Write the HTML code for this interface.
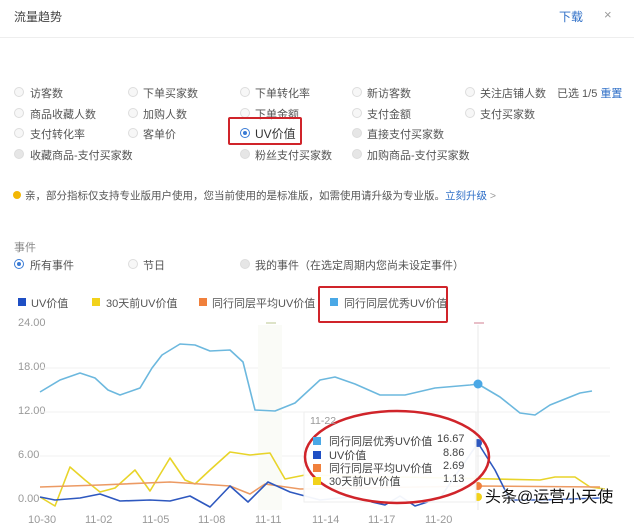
<!DOCTYPE html>
<html><head><meta charset="utf-8"><style>
*{margin:0;padding:0;box-sizing:border-box}
body{width:634px;height:517px;overflow:hidden;background:#fff;font-family:"Liberation Sans","Noto Sans CJK SC",sans-serif;font-size:11px;color:#555;position:relative}
.a{position:absolute;white-space:nowrap}
.r{position:absolute;width:10px;height:10px;border:1px solid #ddd;border-radius:50%;background:#f7f7f7}
.r.g{background:#e6e6e6}
.r.on{border-color:#3a7bd5;background:#fff}
.r.on::after{content:"";position:absolute;left:2px;top:2px;width:4px;height:4px;border-radius:50%;background:#3a7bd5}
.sq{position:absolute;width:8px;height:8px}
.x{position:absolute;top:514px;color:#999;font-size:11px}
</style></head><body>
<div class="a" style="left:14px;top:8px;font-size:12px;color:#444">流量趋势</div>
<div class="a" style="left:559px;top:8px;font-size:12px;color:#2f6fc7">下载</div>
<div class="a" style="left:604px;top:7px;font-size:13px;color:#999">×</div>
<div class="a" style="left:0;top:37px;width:634px;height:1px;background:#eee"></div>

<div class="r" style="left:14px;top:87px"></div><div class="a" style="left:30px;top:85px">访客数</div>
<div class="r" style="left:128px;top:87px"></div><div class="a" style="left:143px;top:85px">下单买家数</div>
<div class="r" style="left:240px;top:87px"></div><div class="a" style="left:255px;top:85px">下单转化率</div>
<div class="r" style="left:352px;top:87px"></div><div class="a" style="left:367px;top:85px">新访客数</div>
<div class="r" style="left:465px;top:87px"></div><div class="a" style="left:480px;top:85px">关注店铺人数</div>
<div class="a" style="left:557px;top:85px">已选 1/5 <span style="color:#2f6fc7">重置</span></div>

<div class="r" style="left:14px;top:108px"></div><div class="a" style="left:30px;top:106px">商品收藏人数</div>
<div class="r" style="left:128px;top:108px"></div><div class="a" style="left:143px;top:106px">加购人数</div>
<div class="r" style="left:240px;top:108px"></div><div class="a" style="left:255px;top:106px">下单金额</div>
<div class="r" style="left:352px;top:108px"></div><div class="a" style="left:367px;top:106px">支付金额</div>
<div class="r" style="left:465px;top:108px"></div><div class="a" style="left:480px;top:106px">支付买家数</div>

<div class="r" style="left:14px;top:128px"></div><div class="a" style="left:30px;top:126px">支付转化率</div>
<div class="r" style="left:128px;top:128px"></div><div class="a" style="left:143px;top:126px">客单价</div>
<div class="r on" style="left:240px;top:128px"></div><div class="a" style="left:255px;top:125px;font-size:12px;color:#333">UV价值</div>
<div class="a" style="left:228px;top:117px;width:74px;height:28px;border:2px solid #d0242a;border-radius:2px"></div>
<div class="r g" style="left:352px;top:128px"></div><div class="a" style="left:367px;top:126px">直接支付买家数</div>

<div class="r g" style="left:14px;top:149px"></div><div class="a" style="left:30px;top:147px">收藏商品-支付买家数</div>
<div class="r g" style="left:240px;top:149px"></div><div class="a" style="left:255px;top:147px">粉丝支付买家数</div>
<div class="r g" style="left:352px;top:149px"></div><div class="a" style="left:367px;top:147px">加购商品-支付买家数</div>

<div class="a" style="left:13px;top:191px;width:8px;height:8px;border-radius:50%;background:#f2b705"></div>
<div class="a" style="left:25px;top:188px;font-size:10.5px">亲，部分指标仅支持专业版用户使用，您当前使用的是标准版，如需使用请升级为专业版。<span style="color:#2f6fc7">立刻升级</span> <span style="color:#999">&gt;</span></div>

<div class="a" style="left:14px;top:239px;color:#888">事件</div>
<div class="r on" style="left:14px;top:259px"></div><div class="a" style="left:30px;top:257px">所有事件</div>
<div class="r" style="left:128px;top:259px"></div><div class="a" style="left:143px;top:257px">节日</div>
<div class="r g" style="left:240px;top:259px"></div><div class="a" style="left:255px;top:257px">我的事件（在选定周期内您尚未设定事件）</div>

<div class="sq" style="left:18px;top:298px;background:#1f4fc4"></div><div class="a" style="left:31px;top:295px">UV价值</div>
<div class="sq" style="left:92px;top:298px;background:#f2d21b"></div><div class="a" style="left:106px;top:295px">30天前UV价值</div>
<div class="sq" style="left:199px;top:298px;background:#f0803c"></div><div class="a" style="left:212px;top:295px">同行同层平均UV价值</div>
<div class="sq" style="left:330px;top:298px;background:#4aa8e6"></div><div class="a" style="left:344px;top:295px">同行同层优秀UV价值</div>
<div class="a" style="left:318px;top:286px;width:130px;height:37px;border:2px solid #d0242a;border-radius:2px"></div>

<div class="a" style="left:18px;top:317px;color:#999;font-size:11px">24.00</div>
<div class="a" style="left:18px;top:361px;color:#999;font-size:11px">18.00</div>
<div class="a" style="left:18px;top:405px;color:#999;font-size:11px">12.00</div>
<div class="a" style="left:18px;top:449px;color:#999;font-size:11px">6.00</div>
<div class="a" style="left:18px;top:493px;color:#999;font-size:11px">0.00</div>

<svg class="a" style="left:0;top:0" width="634" height="517">
<g stroke="#f2f2f2"><line x1="40" y1="368" x2="610" y2="368"/><line x1="40" y1="412" x2="610" y2="412"/><line x1="40" y1="456" x2="610" y2="456"/></g>
<rect x="258" y="325" width="24" height="185" fill="#fafbf7"/>
<line x1="266" y1="323" x2="276" y2="323" stroke="#dde3c8" stroke-width="2"/>
<line x1="474" y1="323" x2="484" y2="323" stroke="#e8bfc8" stroke-width="2"/>
<line x1="478" y1="325" x2="478" y2="510" stroke="#eaeaea"/>
<g fill="none" stroke-width="1.6" stroke-linejoin="round">
<polyline stroke="#6cb8de" points="40,392 60,380 80,373 95,378 108,390 120,395 140,388 152,368 162,355 180,344 195,345 210,351 230,350 243,362 255,410 275,411 295,403 320,380 335,377 355,384 380,395 405,395 435,388 470,385 478,384 500,397 520,413 535,415 550,405 580,393 592,391"/>
<polyline stroke="#e8d42a" points="40,497 55,506 70,467 85,480 100,492 115,488 135,470 150,491 170,458 185,480 195,484 210,470 230,452 250,455 270,453 285,479 305,475 540,480 555,477 575,477 590,487 605,489"/>
<polyline stroke="#ec9a63" points="40,487 100,485 170,482 230,486 250,494 265,484 300,489 478,486 600,487"/>
<polyline stroke="#2e58bf" points="40,497 55,500 80,498 100,494 120,501 150,500 170,501 190,496 210,507 230,486 248,502 268,482 290,492 320,500 350,497 385,505 400,496 415,506 440,498 478,443 495,470 510,500 540,500 600,498"/>
</g>
<circle cx="478" cy="384" r="4.5" fill="#4aa8e6"/>
<circle cx="478" cy="443" r="4" fill="#2e58bf"/>
<circle cx="478" cy="486" r="4" fill="#f0803c"/>
<circle cx="478" cy="497" r="4" fill="#f2d21b"/>
<rect x="304" y="412" width="172" height="90" fill="#fff" fill-opacity="0.94" stroke="#eee"/>
<ellipse cx="397" cy="457" rx="92" ry="46" fill="none" stroke="#d0242a" stroke-width="2.5"/>
</svg>

<div class="x" style="left:28px">10-30</div>
<div class="x" style="left:85px">11-02</div>
<div class="x" style="left:142px">11-05</div>
<div class="x" style="left:198px">11-08</div>
<div class="x" style="left:255px">11-11</div>
<div class="x" style="left:312px">11-14</div>
<div class="x" style="left:368px">11-17</div>
<div class="x" style="left:425px">11-20</div>

<div class="a" style="left:310px;top:415px;color:#999;font-size:10.5px">11-22</div>
<div class="sq" style="left:313px;top:437px;background:#4aa8e6"></div><div class="a" style="left:329px;top:433px;color:#444">同行同层优秀UV价值</div><div class="a" style="left:437px;top:433px;color:#444">16.67</div>
<div class="sq" style="left:313px;top:451px;background:#1f4fc4"></div><div class="a" style="left:329px;top:447px;color:#444">UV价值</div><div class="a" style="left:443px;top:447px;color:#444">8.86</div>
<div class="sq" style="left:313px;top:464px;background:#f0803c"></div><div class="a" style="left:329px;top:460px;color:#444">同行同层平均UV价值</div><div class="a" style="left:443px;top:460px;color:#444">2.69</div>
<div class="sq" style="left:313px;top:477px;background:#f2d21b"></div><div class="a" style="left:329px;top:473px;color:#444">30天前UV价值</div><div class="a" style="left:443px;top:473px;color:#444">1.13</div>

<div class="a" style="left:485px;top:483px;font-size:16px;color:#111;text-shadow:0 0 2px #fff,0 0 2px #fff">头条@运营小天使</div>
</body></html>
